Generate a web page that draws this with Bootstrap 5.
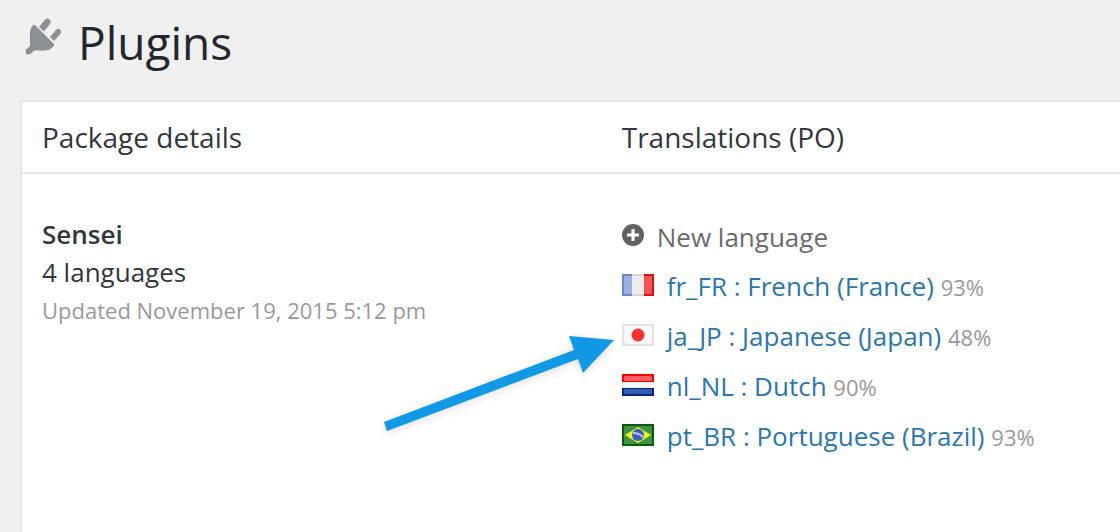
<!DOCTYPE html>
<html lang="en">
<head>
<meta charset="utf-8">
<meta name="viewport" content="width=device-width, initial-scale=1">
<title>Plugins</title>
<link href="https://cdn.jsdelivr.net/npm/bootstrap@5.3.0/dist/css/bootstrap.min.css" rel="stylesheet">
<style>
body{background:#f0f0f0;color:#32373c;font-family:"Open Sans",sans-serif;font-size:26px;line-height:38px;min-height:100vh}
.page-head{padding:10px 24px 26px;gap:14px}
h1{font-size:46px;line-height:64px;font-weight:400;color:#23282d}
.plug-icon{width:40px;height:40px;margin-top:6px}
.panel{border:2px solid #e5e5e5;border-right:0;border-bottom:0;margin-left:20px}
.panel table{table-layout:fixed}
.panel th{font-size:28px;font-weight:400;line-height:38px;padding:16px 20px;border-bottom:2px solid #e5e5e5}
.panel td{padding:41px 20px;vertical-align:top}
.panel td.lang-cell{padding-top:37px}
.details-col{width:52.8%}
.panel a{color:#2b77ab;text-decoration:none}
.panel a.add-link{color:#6b6b6b}
.pkg-name{font-weight:600}
.meta-text{font-size:22px;color:#999}
.lang-list li{line-height:50px;height:50px;white-space:nowrap}
.lang-list a{display:inline-flex;align-items:center;gap:13px}
.flag{width:32px;height:22px;margin-bottom:2px}
.plus-icon{width:22px;height:22px;margin-bottom:4px}
.pointer-arrow{position:absolute;right:-21px;top:150px;filter:drop-shadow(0 2px 4px #0002)}
</style>
</head>
<body class="d-flex flex-column overflow-x-hidden">
<header class="page-head d-flex align-items-start">
<svg class="plug-icon" viewBox="24 16 40 40" aria-hidden="true"><g fill="#8c8f94"><path d="M39 27 45 19.500Q47 17.500 49.500 19.500 51.500 21.500 50 24L44 31.500Z"/><path d="M50 37 56 30Q58 27.500 60.500 30 62 32 60.500 34L54 41Z"/><path d="M33 25Q34 24 35 25L54 44Q55 45 53.500 46L50 49.500Q46 51 40 50.500L34 50.500 31 53.500Q28 55 26.500 54 25 52 26 49.500L30 46Q30 42 30 37 29 30 33 25Z"/></g></svg>
<h1 class="mb-0">Plugins</h1>
</header>
<main class="panel bg-white flex-grow-1">
<table class="w-100">
<thead><tr><th class="details-col" scope="col">Package details</th><th scope="col">Translations (PO)</th></tr></thead>
<tbody><tr>
<td class="position-relative">
<div class="pkg-name">Sensei</div>
<div>4 languages</div>
<div class="meta-text">Updated November 19, 2015 5:12 pm</div>
<svg class="pointer-arrow" width="247" height="120" viewBox="376 324 247 120" aria-hidden="true"><path fill="#1299e5" d="M384 422 574 350 569 336 614 340 583 373 578 359 387 431Z"/></svg>
</td>
<td class="lang-cell">
<ul class="lang-list list-unstyled m-0">
<li><a class="add-link" href="#"><svg class="plus-icon" viewBox="0 0 22 22" aria-hidden="true"><circle cx="11" cy="11" r="11" fill="#626262"/><path d="M11 5v12M5 11h12" stroke="#fff" stroke-width="3"/></svg>New language</a></li>
<li><a href="#"><svg class="flag" viewBox="0 0 32 22" aria-hidden="true"><path fill="#9db1e0" d="M0 0h11v22H0z"/><path fill="#ececec" d="M10 0h12v22H10z"/><path fill="#f05555" d="M22 0h10v22H22z"/><path fill="none" stroke="#7088cc" stroke-width="2" d="M10 1H1v20h9"/><path fill="none" stroke="#d4d4d4" stroke-width="2" d="M10 1h12M10 21h12"/><path fill="none" stroke="#e01010" stroke-width="2" d="M22 1h9v20h-9"/></svg>fr_FR : French (France)</a> <span class="meta-text">93%</span></li>
<li><a href="#"><svg class="flag" viewBox="0 0 32 22" aria-hidden="true"><path fill="#f9f9f9" stroke="#e2e2e2" stroke-width="2" d="M1 1h30v20H1z"/><circle cx="16" cy="11" r="6.500" fill="#fa3232"/></svg>ja_JP : Japanese (Japan)</a> <span class="meta-text">48%</span></li>
<li><a href="#"><svg class="flag" viewBox="0 0 32 22" aria-hidden="true"><path fill="#f80000" d="M0 0h32v8H0z"/><path fill="#ff6060" d="M2 2h28v5H2z"/><path fill="#f5f5f5" d="M0 8h32v6H0z"/><path fill="#10208a" d="M0 14h32v8H0z"/><path fill="#2c60a8" d="M2 15h28v5H2z"/></svg>nl_NL : Dutch</a> <span class="meta-text">90%</span></li>
<li><a href="#"><svg class="flag" viewBox="0 0 32 22" aria-hidden="true"><path fill="#0b5a0b" d="M0 0h32v22H0z"/><path fill="#3f9440" d="M2 2h28v18H2z"/><path fill="#f5ee28" d="M16 3 29 11 16 19 3 11Z"/><circle cx="16" cy="11" r="6" fill="#3560cc"/><path fill="none" stroke="#b8ccf5" stroke-width="2" d="M11 9Q17 9 21 13"/></svg>pt_BR : Portuguese (Brazil)</a> <span class="meta-text">93%</span></li>
</ul>
</td>
</tr></tbody>
</table>
</main>
</body>
</html>
